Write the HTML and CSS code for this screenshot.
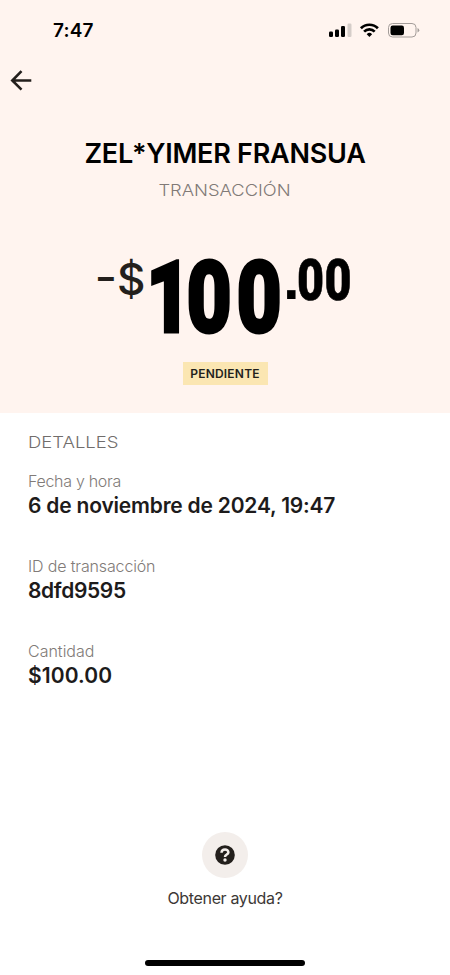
FILE: index.html
```html
<!DOCTYPE html>
<html lang="es">
<head>
<meta charset="utf-8">
<title>Transacción</title>
<link rel="stylesheet" href="styles.css">
</head>
<body>
<main class="screen">
  <section class="hero">
    <div class="status">
      <span class="time">7:47</span>
      <svg class="indicators" width="94" height="18" viewBox="0 0 94 18">
        <rect x="1" y="9.5" width="4" height="5.5" rx="1.2"/>
        <rect x="7" y="7.5" width="4" height="7.5" rx="1.2"/>
        <rect x="13" y="4" width="4" height="11" rx="1.2"/>
        <rect x="19.5" y="1.5" width="4" height="13.5" rx="1.2" fill="#d5cdc9"/>
        <g fill="none" stroke="#000" stroke-width="2.7">
          <path d="M32.9 6.3a12 12 0 0 1 17 0"/>
          <path d="M36.1 9.6a7.5 7.5 0 0 1 10.6 0"/>
        </g>
        <path d="M38.7 12.2a3.8 3.8 0 0 1 5.4 0l-2.7 2.9z"/>
        <rect x="60.5" y="1.5" width="27.5" height="13.5" rx="4" fill="none" stroke="#a49d9a"/>
        <rect x="62.5" y="3.5" width="13.5" height="9.8" rx="2.2"/>
        <path d="M89.5 6v4.5q1.8-.6 1.8-2.2T89.5 6z" fill="#a49d9a"/>
      </svg>
    </div>
    <svg class="back" width="24" height="24" viewBox="0 0 24 24"><path d="M23.3 12.5H4M13.5 3.1 4.3 12.5l9.2 9.2"/></svg>
    <h1 class="name">ZEL*YIMER FRANSUA</h1>
    <p class="kind">TRANSACCIÓN</p>
    <div class="amount">
      <span class="minus">−</span><span class="sign">$</span><span class="whole"><span class="one">1</span>00</span><span class="point">.</span><span class="cents">00</span>
    </div>
    <span class="badge">PENDIENTE</span>
  </section>
  <section class="details">
    <h2 class="heading">DETALLES</h2>
    <dl class="list">
      <div class="item"><dt class="date-label">Fecha y hora</dt><dd class="date">6 de noviembre de 2024, 19:47</dd></div>
      <div class="item"><dt>ID de transacción</dt><dd class="id">8dfd9595</dd></div>
      <div class="item"><dt class="quantity-label">Cantidad</dt><dd class="quantity">$100.00</dd></div>
    </dl>
  </section>
  <footer class="help">
    <div class="disc">
      <svg width="20" height="20" viewBox="0 0 20 20"><circle cx="10" cy="10" r="9.8" fill="#231f1c"/><path d="M6.5 7.8C6.6 3.3 13.5 3.6 13.4 7.4c-.1 2.3-3.4 2-3.4 4.5" fill="none" stroke="#f3eeeb" stroke-width="2.5"/><circle cx="10" cy="15" r="1.7" fill="#f3eeeb"/></svg>
    </div>
    <span class="help-text">Obtener ayuda?</span>
    <div class="home"></div>
  </footer>
</main>
</body>
</html>
```
FILE: styles.css
```css
* { box-sizing: border-box; margin: 0; padding: 0; }
body { background: #fff; font-family: Inter, "Liberation Sans", sans-serif; color: #000; }
.screen { width: 450px; height: 975px; display: flex; flex-direction: column; overflow: hidden; }
.hero { height: 413px; background: #fff4ef; display: flex; flex-direction: column; align-items: center; }
.status { width: 100%; height: 68px; padding: 20px 28px 0 53px; display: flex; justify-content: space-between; align-items: flex-start; }
.time { font-size: 19px; line-height: 22px; font-weight: 600; letter-spacing: .2px; }
.indicators { margin-top: 2px; }
.back { align-self: flex-start; margin-left: 8px; fill: none; stroke: #231f1c; stroke-width: 2.6; }
.name { margin-top: 45px; font-size: 27px; line-height: 34px; font-weight: 600; letter-spacing: -.25px; white-space: nowrap; }
.kind { margin: 9px 1px 0 0; font-size: 16.5px; line-height: 20px; font-weight: 350; color: #817a77; transform: scaleX(1.11); }
.amount { width: 254px; height: 78px; margin-top: 58px; display: flex; align-items: flex-start; white-space: nowrap; }
.amount > span { flex: none; transform-origin: 0 0; }
.minus { width: 22px; margin-left: -3px; font-size: 32px; line-height: 38px; color: #231f1c; font-weight: 700; }
.sign { width: 29px; font-size: 44px; line-height: 42px; font-weight: 500; color: #231f1c; }
.whole { width: 137px; font: 900 101px/80px Roboto, sans-serif; letter-spacing: 6px; -webkit-text-stroke: 3px #000; transform: scaleX(.773); }
.one { letter-spacing: -6px; }
.point { width: 14px; font: 700 60px/42px "Liberation Sans", sans-serif; }
.cents { width: 53px; font: 900 57px/45px Roboto, sans-serif; letter-spacing: .5px; -webkit-text-stroke: .6px #000; transform: scaleX(.82); }
.badge { width: 85px; height: 23px; margin-top: 26px; background: #fbe6b2; color: #231f1c; font-size: 12px; line-height: 23px; font-weight: 600; letter-spacing: .2px; text-align: center; }
.details { height: 419px; padding: 19px 28px 0; white-space: nowrap; }
.heading { font-size: 16.5px; line-height: 20px; font-weight: 350; color: #716d6b; transform: scaleX(1.12); transform-origin: 0 0; }
.list { margin-top: 18px; }
.item { height: 85px; }
dt { font-size: 16px; line-height: 22px; font-weight: 350; letter-spacing: -.15px; color: #817b78; }
dd { font-size: 21px; line-height: 28px; font-weight: 600; color: #1d1b1b; }
.date-label { letter-spacing: -.3px; }
.quantity-label { letter-spacing: 0; }
.date { letter-spacing: -.2px; }
.id { letter-spacing: -.35px; }
.quantity { letter-spacing: .1px; }
.help { flex: 1; display: flex; flex-direction: column; align-items: center; }
.disc { width: 46px; height: 46px; border-radius: 50%; background: #f3eeeb; display: flex; align-items: center; justify-content: center; }
.help-text { margin-top: 10px; font-size: 16px; line-height: 20px; letter-spacing: -.35px; color: #3c3836; }
.home { width: 160px; height: 6px; margin-top: 52px; border-radius: 3px; background: #000; }
```
